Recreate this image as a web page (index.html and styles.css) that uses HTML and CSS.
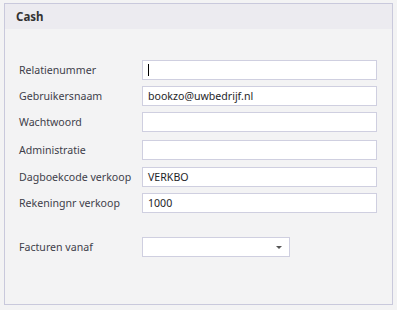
FILE: index.html
```html
<!DOCTYPE html>
<html lang="nl">
<head>
  <meta charset="UTF-8" />
  <title>Cash</title>
  <link rel="stylesheet" href="styles.css">
</head>
<body>

<section class="panel">
  <header class="panel-header">Cash</header>
  <form class="panel-body">
    <label class="row">
      <span class="label">Relatienummer</span>
      <span class="field"><span class="caret"></span></span>
    </label>
    <label class="row">
      <span class="label">Gebruikersnaam</span>
      <span class="field">bookzo@uwbedrijf.nl</span>
    </label>
    <label class="row">
      <span class="label">Wachtwoord</span>
      <span class="field"></span>
    </label>
    <label class="row row-shift2">
      <span class="label">Administratie</span>
      <span class="field"></span>
    </label>
    <label class="row row-shift1">
      <span class="label">Dagboekcode verkoop</span>
      <span class="field">VERKBO</span>
    </label>
    <label class="row">
      <span class="label">Rekeningnr verkoop</span>
      <span class="field">1000</span>
    </label>
    <label class="row row-select">
      <span class="label">Facturen vanaf</span>
      <span class="field select"><span class="arrow"></span></span>
    </label>
  </form>
</section>

</body>
</html>
```

FILE: styles.css
```css
* {
  margin: 0; padding: 0; box-sizing: border-box;
}
body {
  font-family: 'Noto Sans', 'Open Sans', sans-serif;
  font-size: 10.6px;
  background: #f3f3f4;
  color: #3e3e4a;
  padding: 3px 4px;
}

.panel {
  width: 389px;
  height: 302px;
  border: 1px solid #c9c9dc;
  background: #f3f3f4;
}
.panel-header {
  height: 25px;
  background: #ecebf0;
  padding-left: 11px;
  display: flex;
  align-items: center;
  font-weight: 700;
  font-size: 11.5px;
  color: #333;
}

.panel-body {
  padding: 31px 0 0 14px;
  display: flex;
  flex-direction: column;
  gap: 6px;
}
.row {
  display: flex;
  align-items: center;
  height: 20px;
}
.row-shift2 { margin-top: 2px; }
.row-shift1 { margin-top: 1px; }
.row-select { margin-top: 18px; }

.label {
  width: 123px;
  flex: none;
  color: #3e3e4a;
}
.field {
  width: 235px;
  height: 20px;
  background: #fff;
  border: 1px solid #cfcfe0;
  padding-left: 5px;
  display: flex;
  align-items: center;
  color: #1e1e28;
}
.caret {
  width: 1px;
  height: 12px;
  background: #000;
}
.select {
  width: 148px;
  position: relative;
}
.arrow {
  position: absolute;
  right: 7px;
  top: 8px;
  border-left: 3px solid transparent;
  border-right: 3px solid transparent;
  border-top: 3px solid #555;
}
```
